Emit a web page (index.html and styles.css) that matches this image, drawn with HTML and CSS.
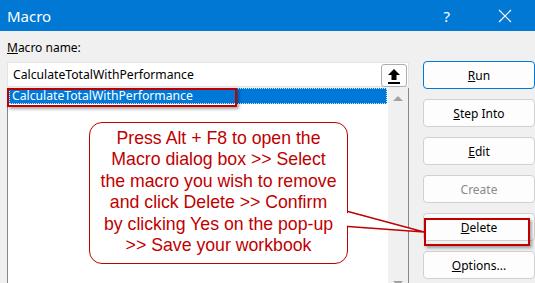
FILE: index.html
```html
<!DOCTYPE html>
<html lang="en">
<head>
  <meta charset="UTF-8" />
  <title>Macro</title>
  <link rel="stylesheet" href="styles.css">
</head>
<body>

  <div class="titlebar">
    <span class="title">Macro</span>
    <span class="help">?</span>
    <svg class="close" width="14" height="14" viewBox="0 0 14 14">
      <path d="M1 1 L13 13 M13 1 L1 13" stroke="#ffffff" stroke-width="1.2" fill="none"/>
    </svg>
  </div>

  <div class="dialog">
    <div class="left">
      <div class="label"><u>M</u>acro name:</div>
      <div class="name-row">
        <div class="name-input">CalculateTotalWithPerformance</div>
        <div class="pick">
          <svg width="14" height="16" viewBox="0 0 14 16">
            <path d="M7 1 L13 7 L9.5 7 L9.5 12 L4.5 12 L4.5 7 L1 7 Z" fill="#000000"/>
            <rect x="1" y="14" width="12" height="2" fill="#000000"/>
          </svg>
        </div>
      </div>
      <div class="list">
        <div class="items">
          <div class="item selected">CalculateTotalWithPerformance</div>
        </div>
        <div class="scrollbar">
          <span class="arrow up"></span>
          <span class="arrow down"></span>
        </div>
      </div>
    </div>

    <div class="buttons">
      <button class="default"><u>R</u>un</button>
      <button><u>S</u>tep Into</button>
      <button><u>E</u>dit</button>
      <button class="disabled">Create</button>
      <button><u>D</u>elete</button>
      <button><u>O</u>ptions...</button>
    </div>
  </div>

  <!-- annotations -->
  <div class="mark mark-item"></div>
  <div class="mark mark-delete"></div>

  <div class="callout">
    Press Alt + F8 to open the<br>
    Macro dialog box &gt;&gt; Select<br>
    the macro you wish to remove<br>
    and click Delete &gt;&gt; Confirm<br>
    by clicking Yes on the pop-up<br>
    &gt;&gt; Save your workbook
  </div>
  <svg class="tail" width="535" height="283" viewBox="0 0 535 283">
    <path d="M345 212.5 L424 232 L345 225.5 Z" fill="#ffffff"/>
    <path d="M348 211.5 L424 232 L348 226.5" fill="none" stroke="#c00000" stroke-width="1.3"/>
  </svg>

</body>
</html>
```

FILE: styles.css
```css
body {
  margin: 0;
  width: 535px;
  height: 283px;
  overflow: hidden;
  background: #f0f0f0;
  font-family: "Noto Sans", "Open Sans", sans-serif;
  font-size: 12px;
  color: #000000;
  position: relative;
}

.titlebar {
  height: 31px;
  background: #0078d4;
  color: #ffffff;
  display: flex;
  align-items: center;
}

.title {
  font-size: 15px;
  margin-left: 7px;
  flex: 1;
}

.help {
  font-size: 15px;
  margin-right: 48px;
}

.close {
  margin-right: 23px;
}

.dialog {
  display: flex;
  padding-top: 9px;
  height: 243px;
}

.left {
  margin-left: 7px;
  width: 404px;
}

.label {
  height: 22px;
  line-height: 16px;
}

.name-row {
  display: flex;
  height: 25px;
  background: #ffffff;
  border: 1px solid #e3e3e3;
  box-sizing: border-box;
}

.name-input {
  flex: 1;
  line-height: 23px;
  padding-left: 5px;
  font-size: 12.2px;
}

.pick {
  width: 24px;
  height: 21px;
  margin: 1px 1px 0 0;
  border: 1px solid #adadad;
  border-radius: 3px;
  background: #fdfdfd;
  display: flex;
  align-items: center;
  justify-content: center;
}

.list {
  display: flex;
  height: 196px;
  margin-top: 1px;
  background: #ffffff;
  border-left: 1px solid #828790;
  border-right: 1px solid #828790;
}

.items {
  flex: 1;
  padding: 0 1px;
}

.item {
  height: 16px;
  line-height: 16px;
  padding-left: 3px;
  font-size: 12.2px;
}

.selected {
  background: #0078d7;
  color: #ffffff;
  outline: 1px dotted #cfe3f7;
  outline-offset: -1px;
}

.scrollbar {
  width: 20px;
  background: #f0f0f0;
  position: relative;
}

.arrow {
  position: absolute;
  left: 5px;
  width: 0;
  height: 0;
  border-left: 5px solid transparent;
  border-right: 5px solid transparent;
}

.arrow.up {
  top: 8px;
  border-bottom: 5px solid #a3a3a3;
}

.arrow.down {
  top: 193px;
  border-top: 5px solid #a3a3a3;
}

.buttons {
  margin-left: 14px;
  padding-top: 21px;
  display: flex;
  flex-direction: column;
  gap: 10px;
}

button {
  width: 112px;
  height: 28px;
  flex-shrink: 0;
  padding: 0;
  background: #fdfdfd;
  border: 1px solid #d0d0d0;
  border-radius: 4px;
  font-family: "Noto Sans", "Open Sans", sans-serif;
  font-size: 12px;
  color: #000000;
}

button.default {
  border: 1px solid #0078d4;
}

button.disabled {
  color: #8a8a8a;
}

.mark {
  position: absolute;
  border: 2px solid #c00000;
  box-shadow: 2px 2px 3px rgba(0, 0, 0, 0.35);
  box-sizing: border-box;
}

.mark-item {
  left: 7px;
  top: 88px;
  width: 230px;
  height: 19px;
}

.mark-delete {
  left: 424px;
  top: 218px;
  width: 106px;
  height: 28px;
}

.callout {
  position: absolute;
  left: 89px;
  top: 122px;
  width: 259px;
  height: 142px;
  box-sizing: border-box;
  background: #ffffff;
  border: 1.5px solid #c00000;
  border-radius: 13px;
  color: #c00000;
  font-family: "Liberation Sans", Arial, sans-serif;
  font-size: 17.7px;
  line-height: 21.4px;
  text-align: center;
  padding-top: 5px;
}

.tail {
  position: absolute;
  left: 0;
  top: 0;
}
```
